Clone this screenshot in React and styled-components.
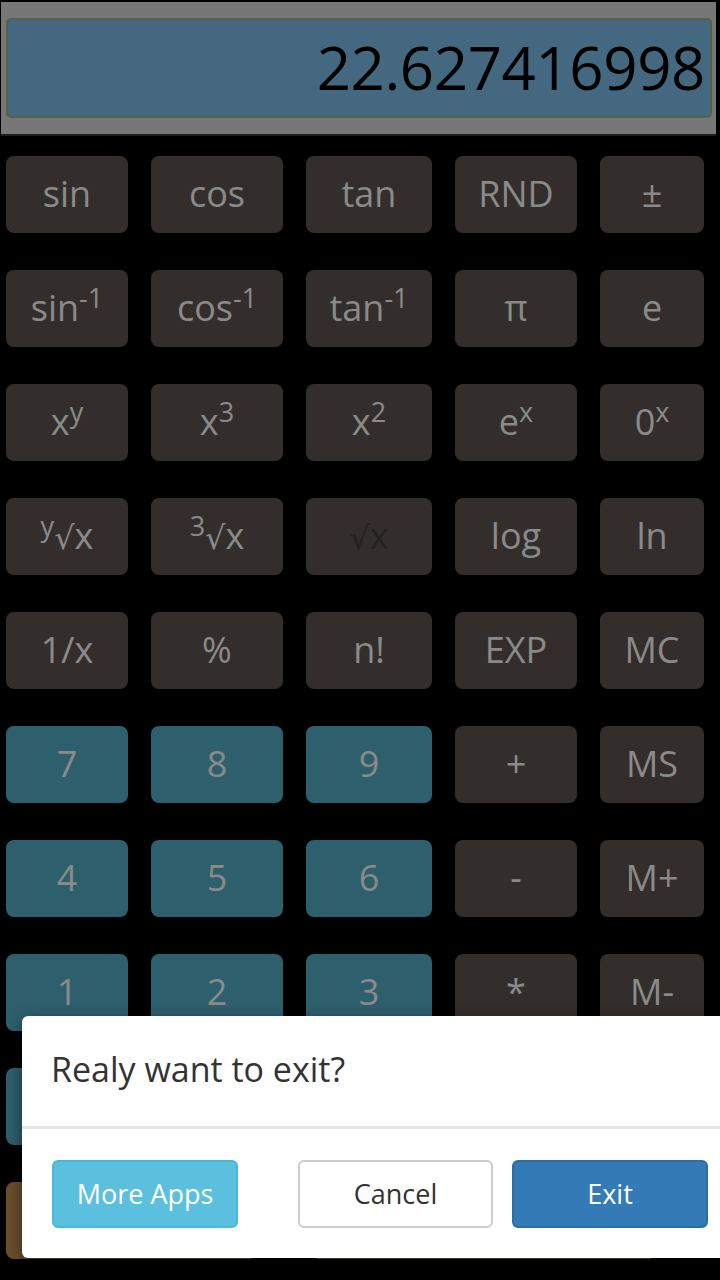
import React from "react";
import styled, { createGlobalStyle } from "styled-components";

const GlobalStyle = createGlobalStyle`
  html, body {
    margin: 0;
    padding: 0;
    background: #000;
  }
  body {
    font-family: "Open Sans", "DejaVu Sans", sans-serif;
  }
`;

const Page = styled.div`
  position: relative;
  width: 720px;
  height: 1280px;
  overflow: hidden;
  background: #000;
  padding-top: 2px;
  box-sizing: border-box;
`;

const DisplayPanel = styled.div`
  margin: 0 4px 0 1px;
  padding: 16px 4px 16px 5px;
  background: #777777;
  border-bottom: 2px solid #1d1d1d;
`;

const Screen = styled.div`
  box-sizing: border-box;
  height: 100px;
  display: flex;
  align-items: center;
  justify-content: flex-end;
  padding: 0 5px 2px 0;
  background: #44687f;
  border: 2px solid #5a6141;
  border-radius: 5px;
  color: #000;
  font-size: 60px;
  letter-spacing: -0.4px;
`;

const Keypad = styled.div`
  display: flex;
  flex-direction: column;
  gap: 37px;
  padding: 20px 16px 0 6px;
`;

const Row = styled.div`
  display: grid;
  grid-template-columns: 122px 132px 126px 122px 104px;
  justify-content: space-between;
`;

const BottomRow = styled.div`
  display: flex;
  gap: 53px;
`;

const keyColors = {
  fn: "#332e2b",
  num: "#2e5f6d",
  act: "#6b4f2d",
};

const Key = styled.div`
  box-sizing: border-box;
  height: 77px;
  width: ${(p) => (p.$w ? `${p.$w}px` : "auto")};
  border-radius: 8px;
  background: ${(p) => keyColors[p.$kind || "fn"]};
  color: ${(p) => (p.$dim ? "#232120" : "#8a8a8a")};
  font-size: 36px;
  display: flex;
  align-items: center;
  justify-content: center;
  padding-bottom: 3px;
  white-space: nowrap;
`;

const Label = styled.span`
  display: inline-block;
`;

const Sup = styled.span`
  font-size: 27px;
  line-height: 0;
  vertical-align: 13px;
`;

const Root = styled.span`
  font-family: "DejaVu Sans", sans-serif;
  font-size: 32px;
`;

const Dialog = styled.div`
  position: absolute;
  left: 22px;
  top: 1016px;
  width: 716px;
  height: 242px;
  box-sizing: border-box;
  background: #fff;
  border-radius: 6px;
  box-shadow: 0 5px 15px rgba(0, 0, 0, 0.5);
  display: flex;
  flex-direction: column;
`;

const DialogHeader = styled.div`
  padding: 31px 29px 35px;
  border-bottom: 3px solid #e5e5e5;
`;

const Title = styled.div`
  font-size: 34px;
  line-height: 44px;
  color: #333;
`;

const DialogFooter = styled.div`
  display: flex;
  justify-content: space-between;
  align-items: center;
  padding: 31px 30px 30px 30px;
`;

const ButtonGroup = styled.div`
  display: flex;
  gap: 19px;
`;

const btnStyles = {
  info: { bg: "#5bc0de", border: "#46b8da", color: "#fff" },
  default: { bg: "#fff", border: "#cccccc", color: "#333" },
  primary: { bg: "#337ab7", border: "#2e6da4", color: "#fff" },
};

const DialogButton = styled.div`
  box-sizing: border-box;
  width: ${(p) => p.$w}px;
  height: 68px;
  display: flex;
  align-items: center;
  justify-content: center;
  border-radius: 6px;
  font-size: 27px;
  background: ${(p) => btnStyles[p.$variant].bg};
  color: ${(p) => btnStyles[p.$variant].color};
  border: 2px solid ${(p) => btnStyles[p.$variant].border};
  padding-bottom: 2px;
`;

const rows = [
  [["sin"], ["cos"], ["tan"], ["RND"], ["±"]],
  [
    [<>sin<Sup>-1</Sup></>],
    [<>cos<Sup>-1</Sup></>],
    [<>tan<Sup>-1</Sup></>],
    ["π"],
    ["e"],
  ],
  [
    [<>x<Sup>y</Sup></>],
    [<>x<Sup>3</Sup></>],
    [<>x<Sup>2</Sup></>],
    [<>e<Sup>x</Sup></>],
    [<>0<Sup>x</Sup></>],
  ],
  [
    [<><Sup>y</Sup><Root>√</Root>x</>],
    [<><Sup>3</Sup><Root>√</Root>x</>],
    [<><Root>√</Root>x</>, "fn", true],
    ["log"],
    ["ln"],
  ],
  [["1/x"], ["%"], ["n!"], ["EXP"], ["MC"]],
  [["7", "num"], ["8", "num"], ["9", "num"], ["+"], ["MS"]],
  [["4", "num"], ["5", "num"], ["6", "num"], ["-"], ["M+"]],
  [["1", "num"], ["2", "num"], ["3", "num"], ["*"], ["M-"]],
  [["0", "num"], [".", "num"], ["00", "num"], ["/"], ["MR"]],
];

export default function App() {
  return (
    <>
      <GlobalStyle />
      <Page>
        <DisplayPanel>
          <Screen>22.627416998</Screen>
        </DisplayPanel>
        <Keypad>
          {rows.map((row, i) => (
            <Row key={i}>
              {row.map(([label, kind, dim], j) => (
                <Key key={j} $kind={kind} $dim={dim}>
                  <Label>{label}</Label>
                </Key>
              ))}
            </Row>
          ))}
          <BottomRow>
            <Key $kind="act" $w={251}><Label>C</Label></Key>
            <Key $kind="act" $w={346}><Label>=</Label></Key>
          </BottomRow>
        </Keypad>
        <Dialog>
          <DialogHeader>
            <Title>Realy want to exit?</Title>
          </DialogHeader>
          <DialogFooter>
            <DialogButton $variant="info" $w={186}>More Apps</DialogButton>
            <ButtonGroup>
              <DialogButton $variant="default" $w={195}>Cancel</DialogButton>
              <DialogButton $variant="primary" $w={196}>Exit</DialogButton>
            </ButtonGroup>
          </DialogFooter>
        </Dialog>
      </Page>
    </>
  );
}
